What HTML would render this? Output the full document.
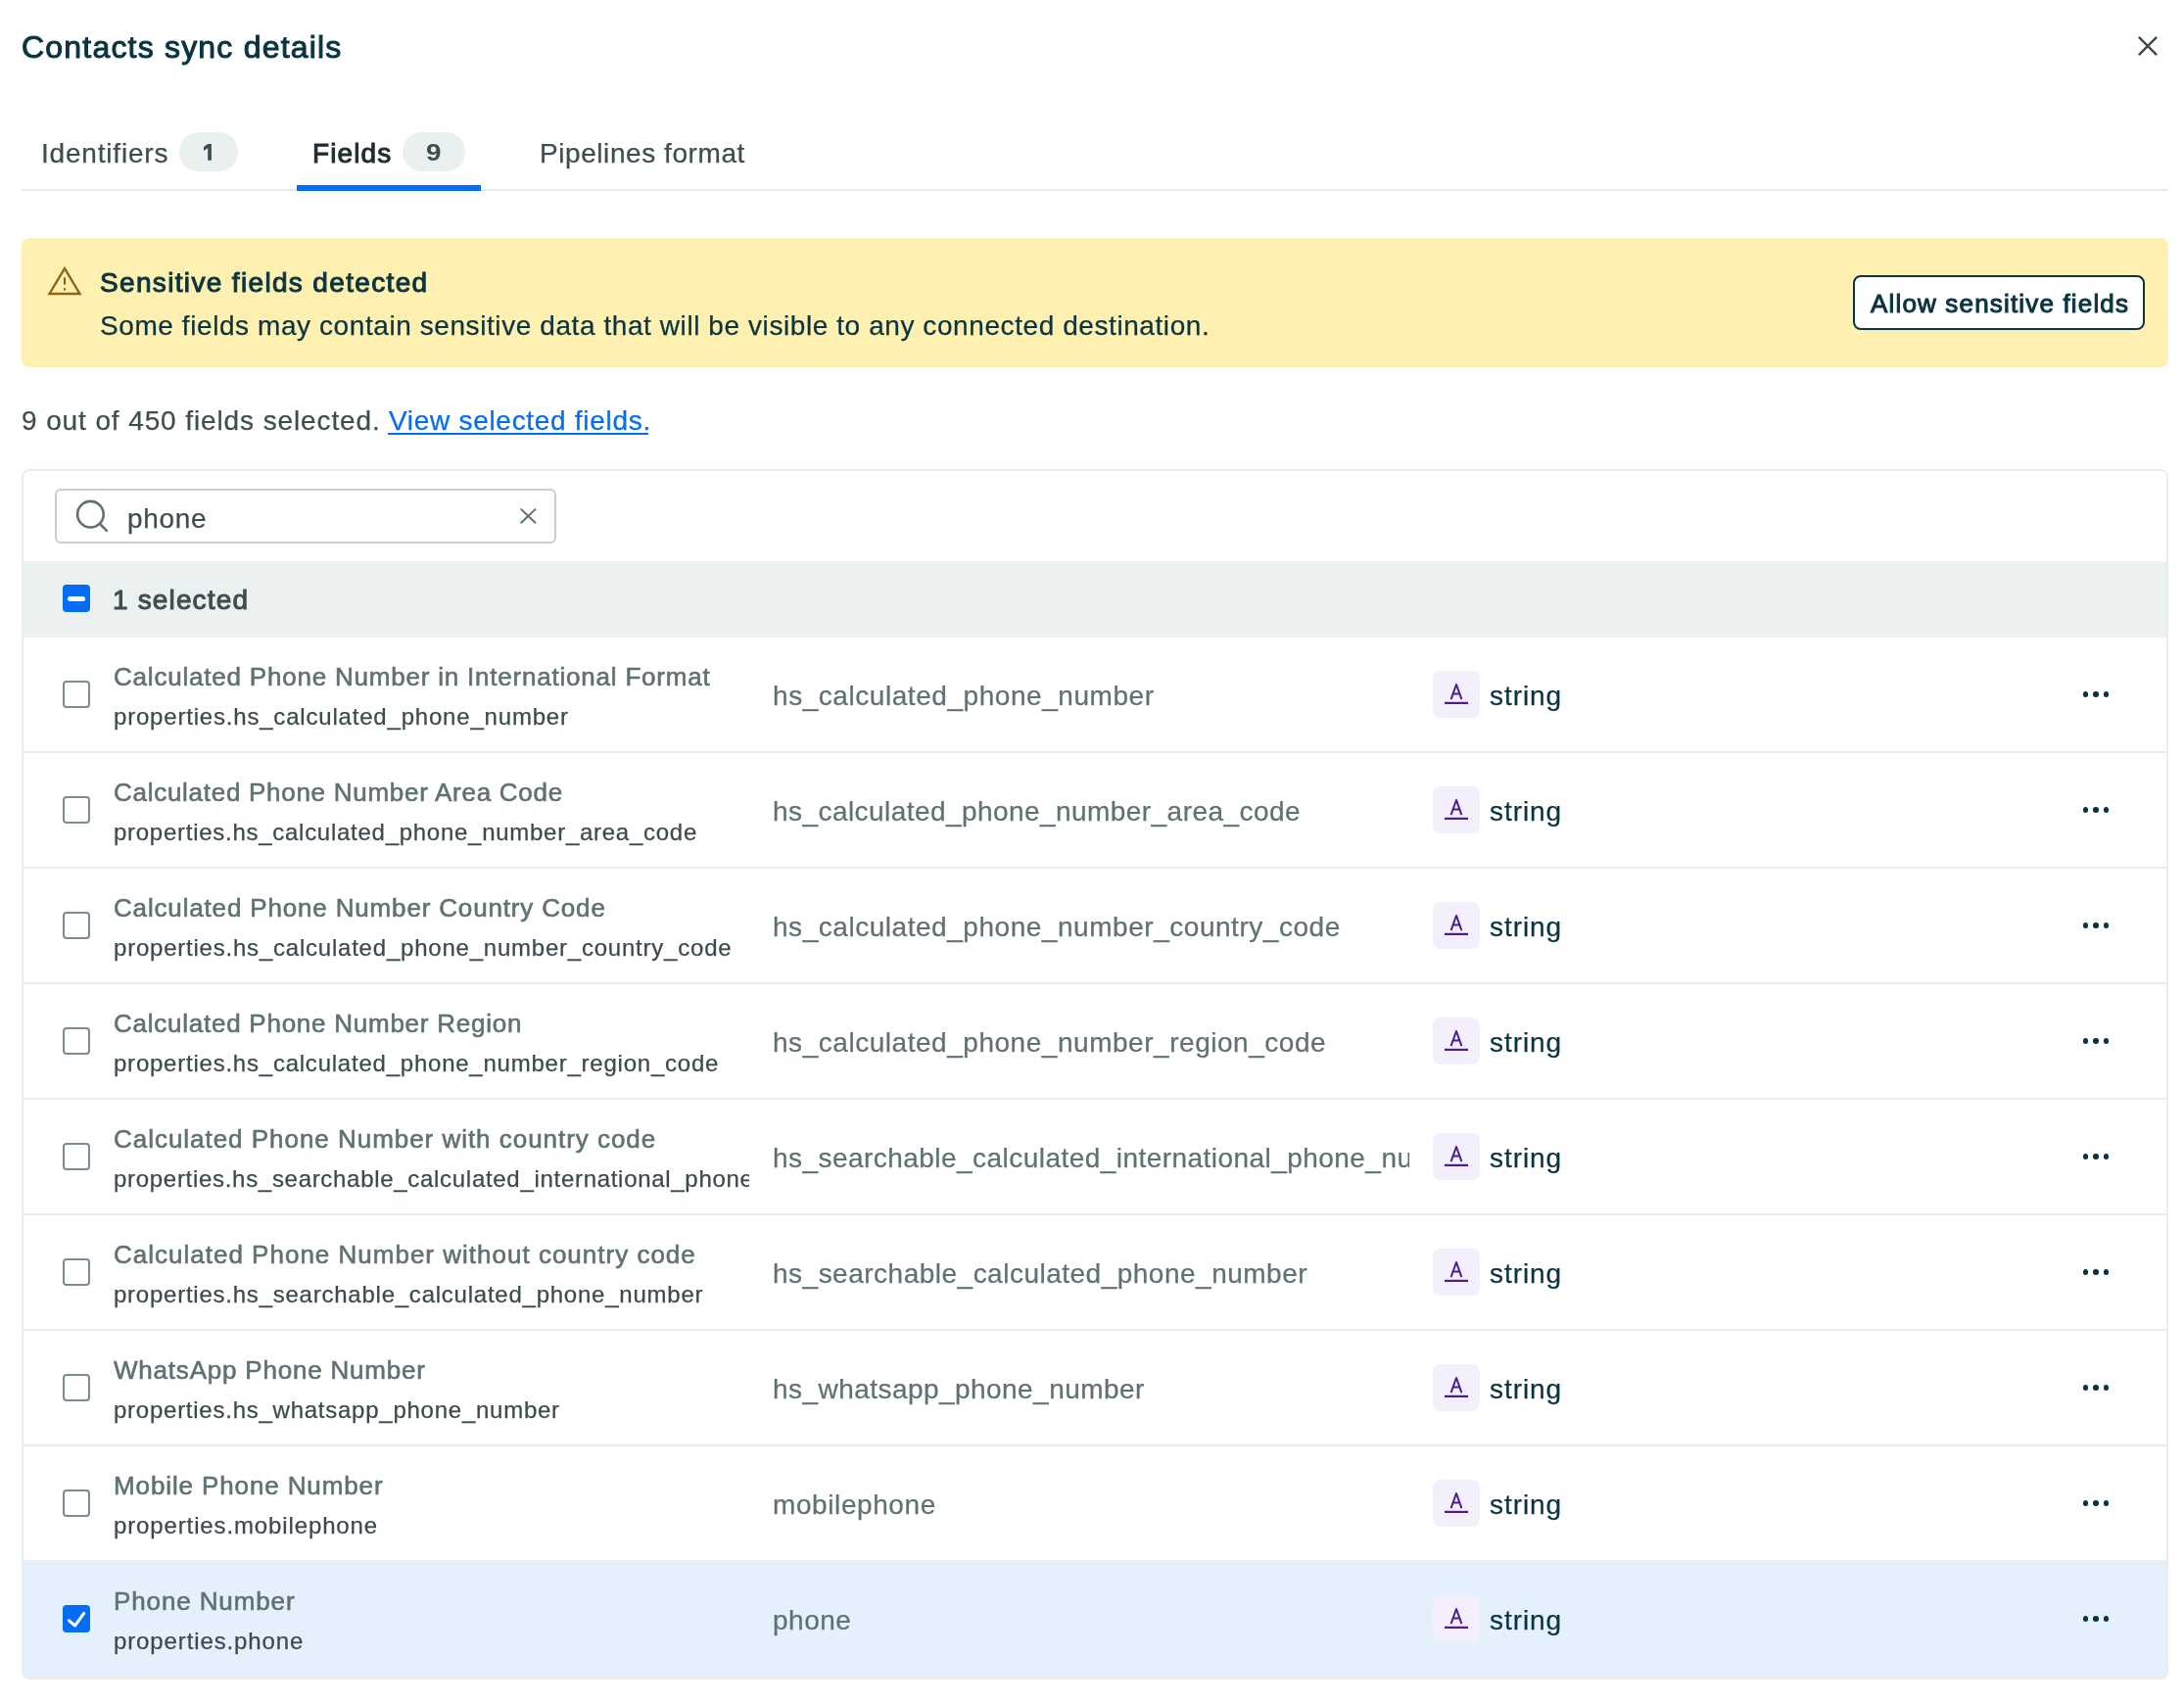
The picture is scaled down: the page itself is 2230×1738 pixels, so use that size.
<!DOCTYPE html>
<html><head><meta charset="utf-8"><title>Contacts sync details</title>
<style>
html,body{margin:0;padding:0;background:#fff;width:2230px;height:1738px;overflow:hidden;position:relative}
body{font-family:"Liberation Sans",sans-serif}
.a{position:absolute}
.t{position:absolute;white-space:nowrap;will-change:transform}
.badge{background:#eaefef;border-radius:20px}
.clip{overflow:hidden}
</style></head><body>
<div class="t" style="left:22px;top:32px;font-size:32px;line-height:32px;color:#0a3440;font-weight:normal;letter-spacing:1.2px;-webkit-text-stroke:1.0px #0a3440;">Contacts sync details</div>
<svg class="a" style="left:2181px;top:35px" width="24" height="24" viewBox="0 0 24 24"><path d="M2.9 2.9L21.1 21.1M21.1 2.9L2.9 21.1" stroke="#3a4a4d" stroke-width="2.4"/></svg>
<div class="t" style="left:41.5px;top:143px;font-size:28px;line-height:28px;color:#3f4d50;font-weight:normal;letter-spacing:0.81px;-webkit-text-stroke:0.25px #3f4d50;">Identifiers</div>
<div class="a badge" style="left:183px;top:135px;width:60px;height:40px"></div>
<svg class="a" style="left:200px;top:140px" width="24" height="30" viewBox="200 140 24 30"><path d="M208 150.1L212.3 147.1H215.9V163.8H212.2V151.2L208 154Z" fill="#3f4d50"/></svg>
<div class="t" style="left:319px;top:143px;font-size:28px;line-height:28px;color:#1f2b2e;font-weight:normal;letter-spacing:1.1px;-webkit-text-stroke:1.0px #1f2b2e;">Fields</div>
<div class="a badge" style="left:411px;top:135px;width:64px;height:40px"></div>
<div class="t" style="left:434.6px;top:144px;font-size:24px;line-height:24px;color:#3f4d50;font-weight:bold;letter-spacing:0px;transform:scaleX(1.16);transform-origin:0 0;">9</div>
<div class="t" style="left:551px;top:143px;font-size:28px;line-height:28px;color:#3f4d50;font-weight:normal;letter-spacing:0.57px;-webkit-text-stroke:0.25px #3f4d50;">Pipelines format</div>
<div class="a" style="left:22px;top:193px;width:2192px;height:2px;background:#e6ecec"></div>
<div class="a" style="left:303px;top:189px;width:188px;height:6px;background:#036ef4"></div>
<div class="a" style="left:22px;top:243px;width:2192px;height:132px;background:#fef0b0;border-radius:8px"></div>
<svg class="a" style="left:47px;top:268px" width="38" height="36" viewBox="0 0 38 36"><path d="M19 6.2L34.5 32H3.5Z" fill="none" stroke="#8f6618" stroke-width="2.4" stroke-linejoin="miter"/><path d="M19 15.2V22.7" stroke="#8f6618" stroke-width="2.1"/><rect x="17.95" y="26.1" width="2.1" height="2.5" rx="0.5" fill="#8f6618"/></svg>
<div class="t" style="left:102px;top:275px;font-size:28px;line-height:28px;color:#0a3440;font-weight:normal;letter-spacing:1.34px;-webkit-text-stroke:1.0px #0a3440;">Sensitive fields detected</div>
<div class="t" style="left:102px;top:319px;font-size:28px;line-height:28px;color:#0a3440;font-weight:normal;letter-spacing:0.58px;-webkit-text-stroke:0.25px #0a3440;">Some fields may contain sensitive data that will be visible to any connected destination.</div>
<div class="a" style="left:1892px;top:281px;width:298px;height:56px;box-sizing:border-box;border:2px solid #0a3440;border-radius:8px;background:#fff"></div>
<div class="t" style="left:1910px;top:297px;font-size:26px;line-height:26px;color:#0a3440;font-weight:normal;letter-spacing:1.17px;-webkit-text-stroke:1.0px #0a3440;">Allow sensitive fields</div>
<div class="t" style="left:22px;top:416px;font-size:28px;line-height:28px;color:#3f4d50;font-weight:normal;letter-spacing:0.89px;-webkit-text-stroke:0.25px #3f4d50;">9 out of 450 fields selected.</div>
<div class="t" style="left:396.5px;top:416px;font-size:28px;line-height:28px;color:#036ef4;font-weight:normal;letter-spacing:0.7px;-webkit-text-stroke:0.25px #036ef4;">View selected fields.</div>
<div class="a" style="left:396px;top:442px;width:266px;height:2px;background:#036ef4"></div>
<div class="a" style="left:22px;top:479px;width:2192px;height:1236px;box-sizing:border-box;border:2px solid #e8eeee;border-radius:8px;overflow:hidden">
<div class="a" style="left:32px;top:18px;width:512px;height:56px;box-sizing:border-box;border:2px solid #c6d0d1;border-radius:6px"></div>
<svg class="a" style="left:50px;top:26px" width="40" height="40" viewBox="0 0 40 40"><circle cx="18.4" cy="18.2" r="13.3" fill="none" stroke="#607174" stroke-width="2.6"/><path d="M28 28L34.9 34.9" stroke="#607174" stroke-width="2.6" stroke-linecap="round"/></svg>
<div class="t" style="left:106px;top:35px;font-size:28px;line-height:28px;color:#3f4d50;font-weight:normal;letter-spacing:0.68px;-webkit-text-stroke:0.25px #3f4d50;">phone</div>
<svg class="a" style="left:505px;top:36px" width="20" height="20" viewBox="0 0 20 20"><path d="M2.7 2.6L18 17.3M18 2.6L2.7 17.3" stroke="#5d6e71" stroke-width="2"/></svg>
<div class="a" style="left:-2px;top:92px;width:2192px;height:78px;background:#ebf0f0"></div>
<div class="a" style="left:40px;top:116px;width:28px;height:28px;border-radius:4px;background:#036ef4"></div>
<div class="a" style="left:44.599999999999994px;top:127.60000000000002px;width:18.5px;height:5px;border-radius:2.5px;background:#fff"></div>
<div class="t" style="left:91px;top:118px;font-size:28px;line-height:28px;color:#3f4d50;font-weight:normal;letter-spacing:1.15px;-webkit-text-stroke:1.0px #3f4d50;">1 selected</div>
<div class="a" style="left:0px;top:286px;width:2188px;height:2px;background:#e8eeee"></div>
<div class="a" style="left:40px;top:214px;width:28px;height:28px;box-sizing:border-box;border:2px solid #7b8b8e;border-radius:4px;background:#fff"></div>
<div class="a clip" style="left:92px;top:192px;width:649px;height:36px"><div class="t" style="left:0px;top:5px;font-size:26px;line-height:26px;color:#607174;font-weight:normal;letter-spacing:0.792px;-webkit-text-stroke:0.6px #607174;">Calculated Phone Number in International Format</div></div>
<div class="a clip" style="left:92px;top:236px;width:649px;height:32px"><div class="t" style="left:0px;top:3px;font-size:24px;line-height:24px;color:#3b4a4d;font-weight:normal;letter-spacing:0.806px;-webkit-text-stroke:0.25px #3b4a4d;">properties.hs_calculated_phone_number</div></div>
<div class="a clip" style="left:765px;top:210px;width:650px;height:40px"><div class="t" style="left:0px;top:6px;font-size:28px;line-height:28px;color:#607174;font-weight:normal;letter-spacing:0.554px;-webkit-text-stroke:0.25px #607174;">hs_calculated_phone_number</div></div>
<div class="a" style="left:1439px;top:204px;width:48px;height:48px;border-radius:8px;background:#f3effc"></div>
<svg class="a" style="left:1439px;top:204px" width="48" height="48" viewBox="0 0 48 48"><path d="M18.6 29.1L24 14L29.4 29.1M20.6 23.6H27.4" fill="none" stroke="#4f1c8f" stroke-width="2" stroke-linejoin="round"/><rect x="12" y="31.8" width="24" height="2.2" fill="#4f1c8f"/></svg>
<div class="t" style="left:1496.6px;top:216px;font-size:28px;line-height:28px;color:#0a3440;font-weight:normal;letter-spacing:0.94px;-webkit-text-stroke:0.25px #0a3440;">string</div>
<div class="a" style="left:2102.55px;top:225.25px;width:5.5px;height:5.5px;border-radius:50%;background:#0a3440"></div>
<div class="a" style="left:2113.25px;top:225.25px;width:5.5px;height:5.5px;border-radius:50%;background:#0a3440"></div>
<div class="a" style="left:2123.85px;top:225.25px;width:5.5px;height:5.5px;border-radius:50%;background:#0a3440"></div>
<div class="a" style="left:0px;top:404px;width:2188px;height:2px;background:#e8eeee"></div>
<div class="a" style="left:40px;top:332px;width:28px;height:28px;box-sizing:border-box;border:2px solid #7b8b8e;border-radius:4px;background:#fff"></div>
<div class="a clip" style="left:92px;top:310px;width:649px;height:36px"><div class="t" style="left:0px;top:5px;font-size:26px;line-height:26px;color:#607174;font-weight:normal;letter-spacing:0.721px;-webkit-text-stroke:0.6px #607174;">Calculated Phone Number Area Code</div></div>
<div class="a clip" style="left:92px;top:354px;width:649px;height:32px"><div class="t" style="left:0px;top:3px;font-size:24px;line-height:24px;color:#3b4a4d;font-weight:normal;letter-spacing:0.728px;-webkit-text-stroke:0.25px #3b4a4d;">properties.hs_calculated_phone_number_area_code</div></div>
<div class="a clip" style="left:765px;top:328px;width:650px;height:40px"><div class="t" style="left:0px;top:6px;font-size:28px;line-height:28px;color:#607174;font-weight:normal;letter-spacing:0.44px;-webkit-text-stroke:0.25px #607174;">hs_calculated_phone_number_area_code</div></div>
<div class="a" style="left:1439px;top:322px;width:48px;height:48px;border-radius:8px;background:#f3effc"></div>
<svg class="a" style="left:1439px;top:322px" width="48" height="48" viewBox="0 0 48 48"><path d="M18.6 29.1L24 14L29.4 29.1M20.6 23.6H27.4" fill="none" stroke="#4f1c8f" stroke-width="2" stroke-linejoin="round"/><rect x="12" y="31.8" width="24" height="2.2" fill="#4f1c8f"/></svg>
<div class="t" style="left:1496.6px;top:334px;font-size:28px;line-height:28px;color:#0a3440;font-weight:normal;letter-spacing:0.94px;-webkit-text-stroke:0.25px #0a3440;">string</div>
<div class="a" style="left:2102.55px;top:343.25px;width:5.5px;height:5.5px;border-radius:50%;background:#0a3440"></div>
<div class="a" style="left:2113.25px;top:343.25px;width:5.5px;height:5.5px;border-radius:50%;background:#0a3440"></div>
<div class="a" style="left:2123.85px;top:343.25px;width:5.5px;height:5.5px;border-radius:50%;background:#0a3440"></div>
<div class="a" style="left:0px;top:522px;width:2188px;height:2px;background:#e8eeee"></div>
<div class="a" style="left:40px;top:450px;width:28px;height:28px;box-sizing:border-box;border:2px solid #7b8b8e;border-radius:4px;background:#fff"></div>
<div class="a clip" style="left:92px;top:428px;width:649px;height:36px"><div class="t" style="left:0px;top:5px;font-size:26px;line-height:26px;color:#607174;font-weight:normal;letter-spacing:0.836px;-webkit-text-stroke:0.6px #607174;">Calculated Phone Number Country Code</div></div>
<div class="a clip" style="left:92px;top:472px;width:649px;height:32px"><div class="t" style="left:0px;top:3px;font-size:24px;line-height:24px;color:#3b4a4d;font-weight:normal;letter-spacing:0.78px;-webkit-text-stroke:0.25px #3b4a4d;">properties.hs_calculated_phone_number_country_code</div></div>
<div class="a clip" style="left:765px;top:446px;width:650px;height:40px"><div class="t" style="left:0px;top:6px;font-size:28px;line-height:28px;color:#607174;font-weight:normal;letter-spacing:0.537px;-webkit-text-stroke:0.25px #607174;">hs_calculated_phone_number_country_code</div></div>
<div class="a" style="left:1439px;top:440px;width:48px;height:48px;border-radius:8px;background:#f3effc"></div>
<svg class="a" style="left:1439px;top:440px" width="48" height="48" viewBox="0 0 48 48"><path d="M18.6 29.1L24 14L29.4 29.1M20.6 23.6H27.4" fill="none" stroke="#4f1c8f" stroke-width="2" stroke-linejoin="round"/><rect x="12" y="31.8" width="24" height="2.2" fill="#4f1c8f"/></svg>
<div class="t" style="left:1496.6px;top:452px;font-size:28px;line-height:28px;color:#0a3440;font-weight:normal;letter-spacing:0.94px;-webkit-text-stroke:0.25px #0a3440;">string</div>
<div class="a" style="left:2102.55px;top:461.25px;width:5.5px;height:5.5px;border-radius:50%;background:#0a3440"></div>
<div class="a" style="left:2113.25px;top:461.25px;width:5.5px;height:5.5px;border-radius:50%;background:#0a3440"></div>
<div class="a" style="left:2123.85px;top:461.25px;width:5.5px;height:5.5px;border-radius:50%;background:#0a3440"></div>
<div class="a" style="left:0px;top:640px;width:2188px;height:2px;background:#e8eeee"></div>
<div class="a" style="left:40px;top:568px;width:28px;height:28px;box-sizing:border-box;border:2px solid #7b8b8e;border-radius:4px;background:#fff"></div>
<div class="a clip" style="left:92px;top:546px;width:649px;height:36px"><div class="t" style="left:0px;top:5px;font-size:26px;line-height:26px;color:#607174;font-weight:normal;letter-spacing:0.751px;-webkit-text-stroke:0.6px #607174;">Calculated Phone Number Region</div></div>
<div class="a clip" style="left:92px;top:590px;width:649px;height:32px"><div class="t" style="left:0px;top:3px;font-size:24px;line-height:24px;color:#3b4a4d;font-weight:normal;letter-spacing:0.771px;-webkit-text-stroke:0.25px #3b4a4d;">properties.hs_calculated_phone_number_region_code</div></div>
<div class="a clip" style="left:765px;top:564px;width:650px;height:40px"><div class="t" style="left:0px;top:6px;font-size:28px;line-height:28px;color:#607174;font-weight:normal;letter-spacing:0.535px;-webkit-text-stroke:0.25px #607174;">hs_calculated_phone_number_region_code</div></div>
<div class="a" style="left:1439px;top:558px;width:48px;height:48px;border-radius:8px;background:#f3effc"></div>
<svg class="a" style="left:1439px;top:558px" width="48" height="48" viewBox="0 0 48 48"><path d="M18.6 29.1L24 14L29.4 29.1M20.6 23.6H27.4" fill="none" stroke="#4f1c8f" stroke-width="2" stroke-linejoin="round"/><rect x="12" y="31.8" width="24" height="2.2" fill="#4f1c8f"/></svg>
<div class="t" style="left:1496.6px;top:570px;font-size:28px;line-height:28px;color:#0a3440;font-weight:normal;letter-spacing:0.94px;-webkit-text-stroke:0.25px #0a3440;">string</div>
<div class="a" style="left:2102.55px;top:579.25px;width:5.5px;height:5.5px;border-radius:50%;background:#0a3440"></div>
<div class="a" style="left:2113.25px;top:579.25px;width:5.5px;height:5.5px;border-radius:50%;background:#0a3440"></div>
<div class="a" style="left:2123.85px;top:579.25px;width:5.5px;height:5.5px;border-radius:50%;background:#0a3440"></div>
<div class="a" style="left:0px;top:758px;width:2188px;height:2px;background:#e8eeee"></div>
<div class="a" style="left:40px;top:686px;width:28px;height:28px;box-sizing:border-box;border:2px solid #7b8b8e;border-radius:4px;background:#fff"></div>
<div class="a clip" style="left:92px;top:664px;width:649px;height:36px"><div class="t" style="left:0px;top:5px;font-size:26px;line-height:26px;color:#607174;font-weight:normal;letter-spacing:0.969px;-webkit-text-stroke:0.6px #607174;">Calculated Phone Number with country code</div></div>
<div class="a clip" style="left:92px;top:708px;width:649px;height:32px"><div class="t" style="left:0px;top:3px;font-size:24px;line-height:24px;color:#3b4a4d;font-weight:normal;letter-spacing:0.7px;-webkit-text-stroke:0.25px #3b4a4d;">properties.hs_searchable_calculated_international_phone_number</div></div>
<div class="a clip" style="left:765px;top:682px;width:650px;height:40px"><div class="t" style="left:0px;top:6px;font-size:28px;line-height:28px;color:#607174;font-weight:normal;letter-spacing:0.455px;-webkit-text-stroke:0.25px #607174;">hs_searchable_calculated_international_phone_number</div></div>
<div class="a" style="left:1439px;top:676px;width:48px;height:48px;border-radius:8px;background:#f3effc"></div>
<svg class="a" style="left:1439px;top:676px" width="48" height="48" viewBox="0 0 48 48"><path d="M18.6 29.1L24 14L29.4 29.1M20.6 23.6H27.4" fill="none" stroke="#4f1c8f" stroke-width="2" stroke-linejoin="round"/><rect x="12" y="31.8" width="24" height="2.2" fill="#4f1c8f"/></svg>
<div class="t" style="left:1496.6px;top:688px;font-size:28px;line-height:28px;color:#0a3440;font-weight:normal;letter-spacing:0.94px;-webkit-text-stroke:0.25px #0a3440;">string</div>
<div class="a" style="left:2102.55px;top:697.25px;width:5.5px;height:5.5px;border-radius:50%;background:#0a3440"></div>
<div class="a" style="left:2113.25px;top:697.25px;width:5.5px;height:5.5px;border-radius:50%;background:#0a3440"></div>
<div class="a" style="left:2123.85px;top:697.25px;width:5.5px;height:5.5px;border-radius:50%;background:#0a3440"></div>
<div class="a" style="left:0px;top:876px;width:2188px;height:2px;background:#e8eeee"></div>
<div class="a" style="left:40px;top:804px;width:28px;height:28px;box-sizing:border-box;border:2px solid #7b8b8e;border-radius:4px;background:#fff"></div>
<div class="a clip" style="left:92px;top:782px;width:649px;height:36px"><div class="t" style="left:0px;top:5px;font-size:26px;line-height:26px;color:#607174;font-weight:normal;letter-spacing:1.003px;-webkit-text-stroke:0.6px #607174;">Calculated Phone Number without country code</div></div>
<div class="a clip" style="left:92px;top:826px;width:649px;height:32px"><div class="t" style="left:0px;top:3px;font-size:24px;line-height:24px;color:#3b4a4d;font-weight:normal;letter-spacing:0.761px;-webkit-text-stroke:0.25px #3b4a4d;">properties.hs_searchable_calculated_phone_number</div></div>
<div class="a clip" style="left:765px;top:800px;width:650px;height:40px"><div class="t" style="left:0px;top:6px;font-size:28px;line-height:28px;color:#607174;font-weight:normal;letter-spacing:0.495px;-webkit-text-stroke:0.25px #607174;">hs_searchable_calculated_phone_number</div></div>
<div class="a" style="left:1439px;top:794px;width:48px;height:48px;border-radius:8px;background:#f3effc"></div>
<svg class="a" style="left:1439px;top:794px" width="48" height="48" viewBox="0 0 48 48"><path d="M18.6 29.1L24 14L29.4 29.1M20.6 23.6H27.4" fill="none" stroke="#4f1c8f" stroke-width="2" stroke-linejoin="round"/><rect x="12" y="31.8" width="24" height="2.2" fill="#4f1c8f"/></svg>
<div class="t" style="left:1496.6px;top:806px;font-size:28px;line-height:28px;color:#0a3440;font-weight:normal;letter-spacing:0.94px;-webkit-text-stroke:0.25px #0a3440;">string</div>
<div class="a" style="left:2102.55px;top:815.25px;width:5.5px;height:5.5px;border-radius:50%;background:#0a3440"></div>
<div class="a" style="left:2113.25px;top:815.25px;width:5.5px;height:5.5px;border-radius:50%;background:#0a3440"></div>
<div class="a" style="left:2123.85px;top:815.25px;width:5.5px;height:5.5px;border-radius:50%;background:#0a3440"></div>
<div class="a" style="left:0px;top:994px;width:2188px;height:2px;background:#e8eeee"></div>
<div class="a" style="left:40px;top:922px;width:28px;height:28px;box-sizing:border-box;border:2px solid #7b8b8e;border-radius:4px;background:#fff"></div>
<div class="a clip" style="left:92px;top:900px;width:649px;height:36px"><div class="t" style="left:0px;top:5px;font-size:26px;line-height:26px;color:#607174;font-weight:normal;letter-spacing:0.796px;-webkit-text-stroke:0.6px #607174;">WhatsApp Phone Number</div></div>
<div class="a clip" style="left:92px;top:944px;width:649px;height:32px"><div class="t" style="left:0px;top:3px;font-size:24px;line-height:24px;color:#3b4a4d;font-weight:normal;letter-spacing:0.749px;-webkit-text-stroke:0.25px #3b4a4d;">properties.hs_whatsapp_phone_number</div></div>
<div class="a clip" style="left:765px;top:918px;width:650px;height:40px"><div class="t" style="left:0px;top:6px;font-size:28px;line-height:28px;color:#607174;font-weight:normal;letter-spacing:0.451px;-webkit-text-stroke:0.25px #607174;">hs_whatsapp_phone_number</div></div>
<div class="a" style="left:1439px;top:912px;width:48px;height:48px;border-radius:8px;background:#f3effc"></div>
<svg class="a" style="left:1439px;top:912px" width="48" height="48" viewBox="0 0 48 48"><path d="M18.6 29.1L24 14L29.4 29.1M20.6 23.6H27.4" fill="none" stroke="#4f1c8f" stroke-width="2" stroke-linejoin="round"/><rect x="12" y="31.8" width="24" height="2.2" fill="#4f1c8f"/></svg>
<div class="t" style="left:1496.6px;top:924px;font-size:28px;line-height:28px;color:#0a3440;font-weight:normal;letter-spacing:0.94px;-webkit-text-stroke:0.25px #0a3440;">string</div>
<div class="a" style="left:2102.55px;top:933.25px;width:5.5px;height:5.5px;border-radius:50%;background:#0a3440"></div>
<div class="a" style="left:2113.25px;top:933.25px;width:5.5px;height:5.5px;border-radius:50%;background:#0a3440"></div>
<div class="a" style="left:2123.85px;top:933.25px;width:5.5px;height:5.5px;border-radius:50%;background:#0a3440"></div>
<div class="a" style="left:0px;top:1112px;width:2188px;height:2px;background:#e8eeee"></div>
<div class="a" style="left:40px;top:1040px;width:28px;height:28px;box-sizing:border-box;border:2px solid #7b8b8e;border-radius:4px;background:#fff"></div>
<div class="a clip" style="left:92px;top:1018px;width:649px;height:36px"><div class="t" style="left:0px;top:5px;font-size:26px;line-height:26px;color:#607174;font-weight:normal;letter-spacing:0.881px;-webkit-text-stroke:0.6px #607174;">Mobile Phone Number</div></div>
<div class="a clip" style="left:92px;top:1062px;width:649px;height:32px"><div class="t" style="left:0px;top:3px;font-size:24px;line-height:24px;color:#3b4a4d;font-weight:normal;letter-spacing:0.872px;-webkit-text-stroke:0.25px #3b4a4d;">properties.mobilephone</div></div>
<div class="a clip" style="left:765px;top:1036px;width:650px;height:40px"><div class="t" style="left:0px;top:6px;font-size:28px;line-height:28px;color:#607174;font-weight:normal;letter-spacing:0.593px;-webkit-text-stroke:0.25px #607174;">mobilephone</div></div>
<div class="a" style="left:1439px;top:1030px;width:48px;height:48px;border-radius:8px;background:#f3effc"></div>
<svg class="a" style="left:1439px;top:1030px" width="48" height="48" viewBox="0 0 48 48"><path d="M18.6 29.1L24 14L29.4 29.1M20.6 23.6H27.4" fill="none" stroke="#4f1c8f" stroke-width="2" stroke-linejoin="round"/><rect x="12" y="31.8" width="24" height="2.2" fill="#4f1c8f"/></svg>
<div class="t" style="left:1496.6px;top:1042px;font-size:28px;line-height:28px;color:#0a3440;font-weight:normal;letter-spacing:0.94px;-webkit-text-stroke:0.25px #0a3440;">string</div>
<div class="a" style="left:2102.55px;top:1051.25px;width:5.5px;height:5.5px;border-radius:50%;background:#0a3440"></div>
<div class="a" style="left:2113.25px;top:1051.25px;width:5.5px;height:5.5px;border-radius:50%;background:#0a3440"></div>
<div class="a" style="left:2123.85px;top:1051.25px;width:5.5px;height:5.5px;border-radius:50%;background:#0a3440"></div>
<div class="a" style="left:-2px;top:1112px;width:2192px;height:118px;background:#e4f1fd"></div>
<div class="a" style="left:0px;top:1230px;width:2188px;height:2px;background:#e8eeee"></div>
<div class="a" style="left:40px;top:1158px;width:28px;height:28px;border-radius:4px;background:#036ef4"></div>
<svg class="a" style="left:40px;top:1158px" width="28" height="28" viewBox="0 0 28 28"><path d="M6.4 15.8L12.6 21L21.7 8.4" fill="none" stroke="#fff" stroke-width="3" stroke-linecap="round" stroke-linejoin="round"/></svg>
<div class="a clip" style="left:92px;top:1136px;width:649px;height:36px"><div class="t" style="left:0px;top:5px;font-size:26px;line-height:26px;color:#607174;font-weight:normal;letter-spacing:0.88px;-webkit-text-stroke:0.6px #607174;">Phone Number</div></div>
<div class="a clip" style="left:92px;top:1180px;width:649px;height:32px"><div class="t" style="left:0px;top:3px;font-size:24px;line-height:24px;color:#3b4a4d;font-weight:normal;letter-spacing:0.881px;-webkit-text-stroke:0.25px #3b4a4d;">properties.phone</div></div>
<div class="a clip" style="left:765px;top:1154px;width:650px;height:40px"><div class="t" style="left:0px;top:6px;font-size:28px;line-height:28px;color:#607174;font-weight:normal;letter-spacing:0.503px;-webkit-text-stroke:0.25px #607174;">phone</div></div>
<div class="a" style="left:1439px;top:1148px;width:48px;height:48px;border-radius:8px;background:#f3effc"></div>
<svg class="a" style="left:1439px;top:1148px" width="48" height="48" viewBox="0 0 48 48"><path d="M18.6 29.1L24 14L29.4 29.1M20.6 23.6H27.4" fill="none" stroke="#4f1c8f" stroke-width="2" stroke-linejoin="round"/><rect x="12" y="31.8" width="24" height="2.2" fill="#4f1c8f"/></svg>
<div class="t" style="left:1496.6px;top:1160px;font-size:28px;line-height:28px;color:#0a3440;font-weight:normal;letter-spacing:0.94px;-webkit-text-stroke:0.25px #0a3440;">string</div>
<div class="a" style="left:2102.55px;top:1169.25px;width:5.5px;height:5.5px;border-radius:50%;background:#0a3440"></div>
<div class="a" style="left:2113.25px;top:1169.25px;width:5.5px;height:5.5px;border-radius:50%;background:#0a3440"></div>
<div class="a" style="left:2123.85px;top:1169.25px;width:5.5px;height:5.5px;border-radius:50%;background:#0a3440"></div>
</div>
</body></html>
